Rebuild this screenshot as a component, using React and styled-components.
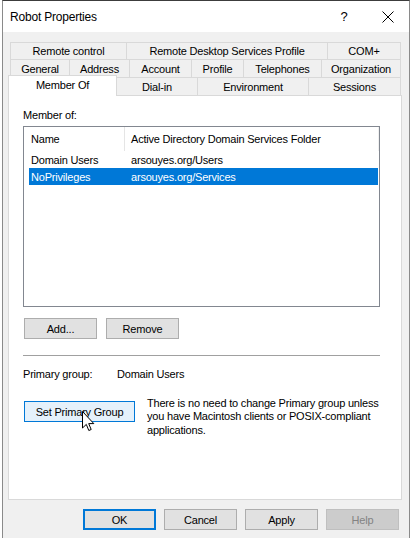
import React from "react";
import styled, { createGlobalStyle } from "styled-components";

const GlobalStyle = createGlobalStyle`
  html, body {
    margin: 0;
    padding: 0;
    background: #ffffff;
  }
  body {
    font-family: "Liberation Sans", Arial, sans-serif;
    font-size: 11px;
    letter-spacing: -0.2px;
    color: #000000;
  }
  * {
    box-sizing: border-box;
  }
`;

const Desktop = styled.div`
  width: 413px;
  height: 538px;
  overflow: hidden;
  background: #ffffff;
  padding-left: 2px;
`;

const Window = styled.div`
  width: 408px;
  height: 545px;
  display: flex;
  flex-direction: column;
  background: #f0f0f0;
  border: 1px solid #8a8a8a;
  border-top-color: #3c3c3c;
`;

const TitleBar = styled.div`
  height: 31px;
  display: flex;
  align-items: center;
  background: #ffffff;
  padding-left: 7px;
`;

const Title = styled.div`
  flex: 1;
  font-size: 12px;
  padding-top: 1px;
`;

const TitleButton = styled.div`
  width: ${(p) => p.$w}px;
  height: 31px;
  display: flex;
  align-items: center;
  justify-content: center;
  font-size: 13px;
`;

const Body = styled.div`
  padding: 10px 5px 0 5px;
  display: flex;
  flex-direction: column;
`;

const TabArea = styled.div`
  width: 394px;
  display: flex;
  flex-direction: column;
`;

const TabRow = styled.div`
  display: flex;
  align-items: flex-end;
  height: ${(p) => p.$h}px;
  margin-left: ${(p) => (p.$front ? 0 : 2)}px;
`;

const Tab = styled.div`
  width: ${(p) => p.$w}px;
  height: ${(p) => p.$h}px;
  display: flex;
  align-items: center;
  justify-content: center;
  background: #f0f0f0;
  border-top: 1px solid #d9d9d9;
  border-right: 1px solid #d9d9d9;
  white-space: nowrap;
  &:first-child {
    border-left: 1px solid #d9d9d9;
  }
`;

const ActiveTab = styled.div`
  width: ${(p) => p.$w}px;
  height: 21px;
  margin-bottom: -1px;
  position: relative;
  z-index: 1;
  display: flex;
  justify-content: center;
  padding-top: 3px;
  background: #ffffff;
  border: 1px solid #d9d9d9;
  border-bottom: none;
  white-space: nowrap;
`;

const Panel = styled.div`
  width: 394px;
  height: 405px;
  background: #ffffff;
  border: 1px solid #d9d9d9;
  padding: 12px 0 0 14px;
  display: flex;
  flex-direction: column;
`;

const Label = styled.div`
  line-height: 15px;
  height: 15px;
`;

const ListBox = styled.div`
  margin-top: 3px;
  width: 357px;
  height: 181px;
  border: 1px solid #828790;
  background: #ffffff;
`;

const ListHeader = styled.div`
  display: flex;
  height: 24px;
  padding-left: 5px;
`;

const HeaderCell = styled.div`
  width: ${(p) => p.$w}px;
  padding-left: ${(p) => p.$pad}px;
  display: flex;
  align-items: center;
  border-right: 1px solid ${(p) => p.$line};
  white-space: nowrap;
`;

const ListRow = styled.div`
  display: flex;
  height: 17px;
  align-items: center;
  margin: 0 1px 0 5px;
  background: ${(p) => (p.$selected ? "#0078d7" : "transparent")};
  color: ${(p) => (p.$selected ? "#ffffff" : "#000000")};
`;

const Cell = styled.div`
  width: ${(p) => (p.$w ? `${p.$w}px` : "auto")};
  padding-left: 2px;
  white-space: nowrap;
`;

const ButtonRow = styled.div`
  display: flex;
  gap: ${(p) => p.$gap}px;
  margin-top: ${(p) => p.$mt}px;
  padding-left: ${(p) => p.$pl || 0}px;
`;

const Button = styled.div`
  width: ${(p) => p.$w || 73}px;
  height: 21px;
  flex-shrink: 0;
  display: flex;
  align-items: center;
  justify-content: center;
  background: ${(p) =>
    p.$disabled ? "#cccccc" : p.$hover ? "#e5f1fb" : "#e1e1e1"};
  color: ${(p) => (p.$disabled ? "#838383" : "#000000")};
  border: ${(p) => (p.$default ? 2 : 1)}px solid
    ${(p) =>
      p.$default || p.$hover ? "#0078d7" : p.$disabled ? "#bfbfbf" : "#adadad"};
  white-space: nowrap;
  position: relative;
  margin-top: ${(p) => p.$mt || 0}px;
`;

const Divider = styled.div`
  margin-top: 16px;
  width: 357px;
  height: 1px;
  background: #a0a0a0;
`;

const InfoRow = styled.div`
  display: flex;
  margin-top: 11px;
  line-height: 15px;
`;

const InfoLabel = styled.div`
  width: 94px;
`;

const PrimaryRow = styled.div`
  display: flex;
  align-items: flex-start;
  margin-top: 15px;
  padding-left: 1px;
`;

const Note = styled.div`
  margin-left: 12px;
  line-height: 13.3px;
  margin-top: 0;
`;

const Cursor = styled.svg`
  position: absolute;
  left: 57px;
  top: 9px;
  z-index: 2;
`;

const Footer = styled.div`
  display: flex;
  justify-content: flex-end;
  gap: 8px;
  margin-top: 9px;
  padding-right: 5px;
`;

const CloseIcon = () => (
  <svg width="12" height="12" viewBox="0 0 12 12">
    <path d="M0.5 0.5 L11.5 11.5 M11.5 0.5 L0.5 11.5" stroke="#000" strokeWidth="1" />
  </svg>
);

const row1 = [
  ["Remote control", 117],
  ["Remote Desktop Services Profile", 201],
  ["COM+", 73],
];
const row2 = [
  ["General", 60],
  ["Address", 60],
  ["Account", 62],
  ["Profile", 52],
  ["Telephones", 78],
  ["Organization", 79],
];
const row3 = [
  ["Dial-in", 81],
  ["Environment", 111],
  ["Sessions", 92],
];

const groups = [
  { name: "Domain Users", folder: "arsouyes.org/Users" },
  { name: "NoPrivileges", folder: "arsouyes.org/Services", selected: true },
];

export default function App() {
  return (
    <>
      <GlobalStyle />
      <Desktop>
        <Window>
          <TitleBar>
            <Title>Robot Properties</Title>
            <TitleButton $w={46}>?</TitleButton>
            <TitleButton $w={42}>
              <CloseIcon />
            </TitleButton>
          </TitleBar>
          <Body>
            <TabArea>
              <TabRow $h={17}>
                {row1.map(([t, w]) => (
                  <Tab key={t} $w={w} $h={17}>
                    {t}
                  </Tab>
                ))}
              </TabRow>
              <TabRow $h={18}>
                {row2.map(([t, w]) => (
                  <Tab key={t} $w={w} $h={18}>
                    {t}
                  </Tab>
                ))}
              </TabRow>
              <TabRow $h={18} $front>
                <ActiveTab $w={109}>Member Of</ActiveTab>
                {row3.map(([t, w]) => (
                  <Tab key={t} $w={w} $h={18}>
                    {t}
                  </Tab>
                ))}
              </TabRow>
            </TabArea>
            <Panel>
              <Label>Member of:</Label>
              <ListBox>
                <ListHeader>
                  <HeaderCell $w={96} $pad={2} $line="#e5e5e5">
                    Name
                  </HeaderCell>
                  <HeaderCell $w={254} $pad={6} $line="#f0f0f0">
                    Active Directory Domain Services Folder
                  </HeaderCell>
                </ListHeader>
                {groups.map((g) => (
                  <ListRow key={g.name} $selected={g.selected}>
                    <Cell $w={100}>{g.name}</Cell>
                    <Cell>{g.folder}</Cell>
                  </ListRow>
                ))}
              </ListBox>
              <ButtonRow $gap={9} $mt={11} $pl={1}>
                <Button>Add...</Button>
                <Button>Remove</Button>
              </ButtonRow>
              <Divider />
              <InfoRow>
                <InfoLabel>Primary group:</InfoLabel>
                <div>Domain Users</div>
              </InfoRow>
              <PrimaryRow>
                <Button $w={111} $hover $mt={4}>
                  Set Primary Group
                  <Cursor width="13" height="22" viewBox="0 0 13 22">
                    <path
                      d="M0.5 0.5 L0.5 17 L4.3 13.4 L6.8 19.5 L9.2 18.5 L6.7 12.6 L11.8 12.6 Z"
                      fill="#ffffff"
                      stroke="#000000"
                      strokeWidth="1"
                      strokeLinejoin="miter"
                    />
                  </Cursor>
                </Button>
                <Note>
                  There is no need to change Primary group unless
                  <br />
                  you have Macintosh clients or POSIX-compliant
                  <br />
                  applications.
                </Note>
              </PrimaryRow>
            </Panel>
            <Footer>
              <Button $default>OK</Button>
              <Button>Cancel</Button>
              <Button>Apply</Button>
              <Button $disabled>Help</Button>
            </Footer>
          </Body>
        </Window>
      </Desktop>
    </>
  );
}
